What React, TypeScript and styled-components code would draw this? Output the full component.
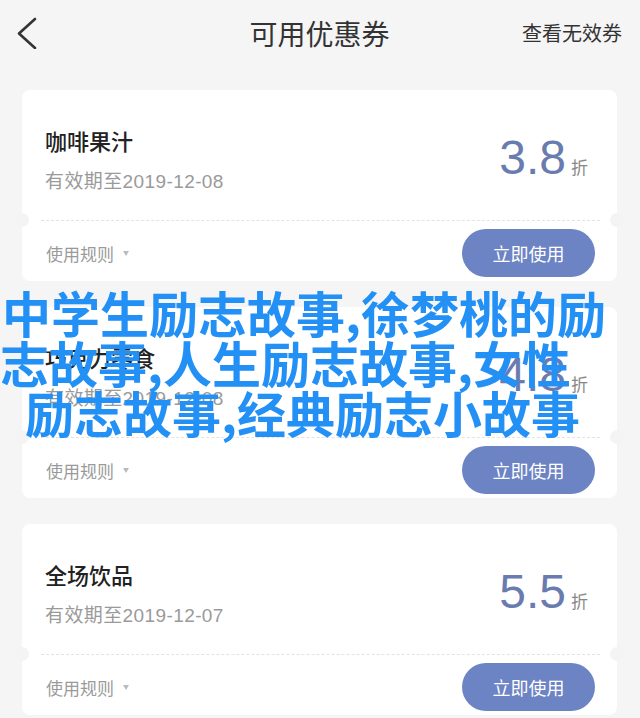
import React from "react";
import styled, { createGlobalStyle } from "styled-components";

const GlobalStyle = createGlobalStyle`
  html, body { margin: 0; padding: 0; background: #f5f5f5; }
  body { font-family: "Liberation Sans", "Noto Sans CJK SC", sans-serif; }
  * { box-sizing: border-box; }
`;

const Page = styled.div`
  position: relative;
  width: 640px;
  height: 718px;
  overflow: hidden;
  background: #f5f5f5;
`;

const Header = styled.header`
  display: grid;
  grid-template-columns: 1fr auto 1fr;
  align-items: center;
  height: 66px;
  padding: 0 18px 0 17px;
`;

const BackButton = styled.div`
  display: flex;
  align-items: center;
  justify-self: start;
`;

const Title = styled.h1`
  margin: 0;
  font-family: "Noto Sans CJK SC", sans-serif;
  font-size: 28px;
  font-weight: 400;
  color: #333;
  line-height: 1;
`;

const HeaderLink = styled.div`
  justify-self: end;
  font-family: "Noto Sans CJK SC", sans-serif;
  font-size: 20px;
  color: #333;
  line-height: 1;
`;

const List = styled.main`
  display: flex;
  flex-direction: column;
  gap: 26px;
  padding: 24px 23px 0 22px;
`;

const Card = styled.section`
  position: relative;
  background: #fff;
  border-radius: 8px;
  display: flex;
  flex-direction: column;
  &::before, &::after {
    content: "";
    position: absolute;
    top: 123px;
    width: 14px;
    height: 14px;
    border-radius: 50%;
    background: #f4f4f4;
  }
  &::before { left: -7px; }
  &::after { right: -7px; }
`;

const CardTop = styled.div`
  display: flex;
  justify-content: space-between;
  height: 130px;
  padding: 0 29px 0 23px;
`;

const Info = styled.div`
  display: flex;
  flex-direction: column;
  padding-top: 35px;
`;

const CardTitle = styled.div`
  font-family: "Noto Sans CJK SC", sans-serif;
  font-size: 22px;
  font-weight: 500;
  line-height: 30px;
  color: #222;
`;

const Expire = styled.div`
  margin-top: 14px;
  font-size: 19px;
  letter-spacing: 0.4px;
  line-height: 26px;
  color: #9a9a9a;
`;

const Value = styled.div`
  display: flex;
  align-items: baseline;
  padding-top: 44px;
`;

const Num = styled.span`
  font-family: "Liberation Sans", sans-serif;
  font-size: 48px;
  line-height: 48px;
  color: #6a7caf;
`;

const Unit = styled.span`
  margin-left: 5px;
  font-family: "Noto Sans CJK SC", sans-serif;
  font-size: 17px;
  color: #888;
`;

const Divider = styled.div`
  margin: 0 17px 0 19px;
  border-top: 1px dashed #e3e3e3;
`;

const CardBottom = styled.div`
  display: flex;
  justify-content: space-between;
  align-items: center;
  height: 60px;
  padding: 4px 22px 0 24px;
`;

const Rules = styled.div`
  display: flex;
  align-items: center;
  font-family: "Noto Sans CJK SC", sans-serif;
  font-size: 17px;
  color: #9a9a9a;
`;

const Caret = styled.span`
  margin-left: 9px;
  width: 0;
  height: 0;
  border-left: 3.5px solid transparent;
  border-right: 3.5px solid transparent;
  border-top: 5px solid #bbb;
`;

const UseButton = styled.button`
  width: 133px;
  height: 48px;
  border: none;
  border-radius: 24px;
  background: #6c83c4;
  color: #fff;
  font-family: "Noto Sans CJK SC", sans-serif;
  font-size: 18px;
  padding: 0;
`;

const Overlay = styled.div`
  position: absolute;
  left: 0;
  top: 287px;
  width: 640px;
  font-family: "Noto Sans CJK SC", sans-serif;
  font-weight: 700;
  font-size: 49px;
  line-height: 50px;
  color: #2290f5;
  white-space: nowrap;
  pointer-events: none;
`;

const OverlayLine = styled.div<{ $indent: number }>`
  padding-left: ${(p) => p.$indent}px;
`;

type Coupon = { name: string; date: string; value: string };

const coupons: Coupon[] = [
  { name: "咖啡果汁", date: "2019-12-08", value: "3.8" },
  { name: "巧克力零食", date: "2019-12-08", value: "4.8" },
  { name: "全场饮品", date: "2019-12-07", value: "5.5" },
];

function BackIcon() {
  return (
    <svg width="20" height="32" viewBox="0 0 20 32" fill="none">
      <polyline
        points="18,2 2,16.5 18,31"
        stroke="#333"
        strokeWidth="2.6"
        strokeLinecap="round"
        strokeLinejoin="round"
      />
    </svg>
  );
}

export default function App() {
  return (
    <Page>
      <GlobalStyle />
      <Header>
        <BackButton>
          <BackIcon />
        </BackButton>
        <Title>可用优惠券</Title>
        <HeaderLink>查看无效券</HeaderLink>
      </Header>
      <List>
        {coupons.map((c) => (
          <Card key={c.name}>
            <CardTop>
              <Info>
                <CardTitle>{c.name}</CardTitle>
                <Expire>有效期至{c.date}</Expire>
              </Info>
              <Value>
                <Num>{c.value}</Num>
                <Unit>折</Unit>
              </Value>
            </CardTop>
            <Divider />
            <CardBottom>
              <Rules>
                使用规则
                <Caret />
              </Rules>
              <UseButton>立即使用</UseButton>
            </CardBottom>
          </Card>
        ))}
      </List>
      <Overlay>
        <OverlayLine $indent={2}>中学生励志故事,徐梦桃的励</OverlayLine>
        <OverlayLine $indent={0}>志故事,人生励志故事,女性</OverlayLine>
        <OverlayLine $indent={25}>励志故事,经典励志小故事</OverlayLine>
      </Overlay>
    </Page>
  );
}
